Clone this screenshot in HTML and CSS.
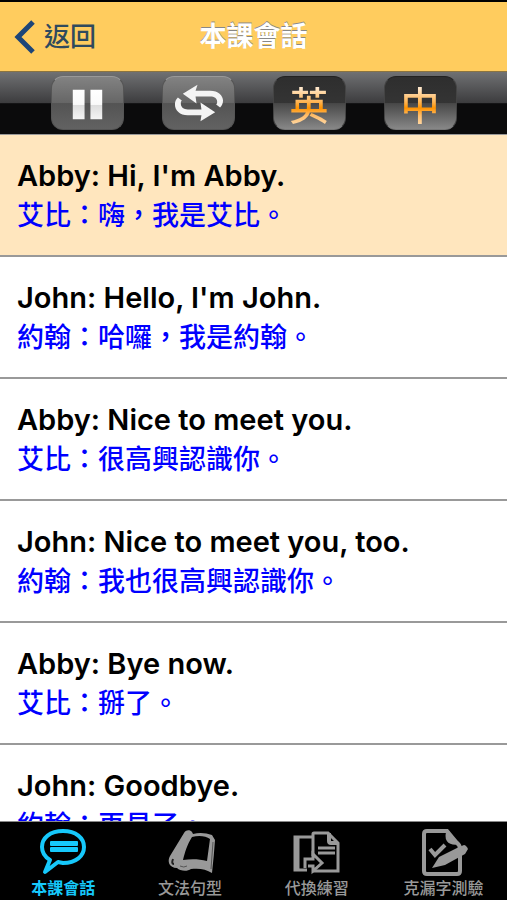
FILE: index.html
```html
<!DOCTYPE html>
<html lang="zh-Hant">
<head>
<meta charset="utf-8">
<meta name="viewport" content="width=device-width, initial-scale=1">
<title>本課會話</title>
<link rel="stylesheet" href="styles.css">
</head>
<body>
<header class="navbar">
  <a class="back" href="#"><svg class="back-icon" viewBox="0 0 22 36" aria-hidden="true"><path d="M19 3 4 18l15 15" fill="none" stroke="#1d4578" stroke-width="5"/></svg>返回</a>
  <h1 class="title">本課會話</h1>
</header>
<div class="toolbar">
  <button class="tool" type="button" aria-label="暫停">
    <svg class="tool-icon" viewBox="0 0 72 53" aria-hidden="true">
      <defs><linearGradient id="silver" x1="0" y1="0" x2="0" y2="1"><stop offset="0" stop-color="#fff"/><stop offset=".5" stop-color="#fafafa"/><stop offset=".52" stop-color="#ddd"/><stop offset="1" stop-color="#f4f4f4"/></linearGradient></defs>
      <path d="M21 13h12v30H21zM39 13h12v30H39z" fill="url(#silver)"/>
    </svg>
  </button>
  <button class="tool" type="button" aria-label="重複">
    <svg class="tool-icon" viewBox="0 0 72 53" aria-hidden="true">
      <path d="M20 17 35 8l-2 6h15c8 0 13 5 13 10 0 3-1 5-3 7l-4-3c1-1 1-2 1-3 0-3-3-5-7-5H33l1 7zM53 36 38 45l1-6H25c-8 0-13-5-13-11 0-3 1-5 3-7l4 3c-1 1-1 2-1 3 0 4 3 6 7 6h14l-1-7z" fill="#f4f4f4"/>
    </svg>
  </button>
  <button class="tool tool-on" type="button" aria-pressed="true"><span class="tool-text">英</span></button>
  <button class="tool tool-on" type="button" aria-pressed="true"><span class="tool-text">中</span></button>
</div>
<main class="lines">
  <article class="line line-active"><p class="en">Abby: Hi, I'm Abby.</p><p class="zh">艾比：嗨，我是艾比。</p></article>
  <article class="line"><p class="en">John: Hello, I'm John.</p><p class="zh">約翰：哈囉，我是約翰。</p></article>
  <article class="line"><p class="en">Abby: Nice to meet you.</p><p class="zh">艾比：很高興認識你。</p></article>
  <article class="line"><p class="en">John: Nice to meet you, too.</p><p class="zh">約翰：我也很高興認識你。</p></article>
  <article class="line"><p class="en">Abby: Bye now.</p><p class="zh">艾比：掰了。</p></article>
  <article class="line"><p class="en">John: Goodbye.</p><p class="zh">約翰：再見了。</p></article>
</main>
<nav class="tabs">
  <a class="tab tab-current" href="#">
    <svg class="tab-icon" viewBox="0 0 50 50" aria-hidden="true"><path d="M25 5C12 5 4 12 4 21c0 6 3 10 8 13L7 46l13-10 5 1c13 0 21-7 21-16S38 5 25 5z" fill="none" stroke="currentColor" stroke-width="4" stroke-linejoin="round"/><rect x="12" y="15" width="28" height="5" rx="1" fill="currentColor"/><rect x="12" y="21" width="28" height="5" rx="1" fill="currentColor"/></svg>
    本課會話
  </a>
  <a class="tab" href="#">
    <svg class="tab-icon" viewBox="0 0 50 50" aria-hidden="true"><path fill-rule="evenodd" d="M19 7c1-3 6-4 8-1l1 2c7-2 13-1 19 1l3 5q-1 15-3 33c-6-4-13-5-21-4-4 3-11 2-14-1-8 0-10-7-7-12zM27 11c-5 8-7 15-9 23 8-1 16-1 24 1l3-22c-4-3-11-4-18-2z" fill="currentColor"/><path d="M8 33q-2 5 1 5" fill="none" stroke="#222" stroke-width="2"/><path d="M15 40q4 2 7 0M46 43l2-27" fill="none" stroke="#555" stroke-width="1"/></svg>
    文法句型
  </a>
  <a class="tab" href="#">
    <svg class="tab-icon" viewBox="0 0 50 50" aria-hidden="true"><g fill="none" stroke="currentColor" stroke-width="3"><path d="M20 11H3v33h12M6 11v32" /><path d="M21 30V8q0-1 1-1h14l10 10v28H20"/><path d="M37 7v8q0 2 2 2h7" stroke-width="4"/><path d="M26 22h17M26 27h17"/><path d="M13 42V33h8v-5l9 9-9 8v-5h-5"/></g></svg>
    代換練習
  </a>
  <a class="tab" href="#">
    <svg class="tab-icon" viewBox="0 0 50 50" aria-hidden="true"><path d="M38 17 28 5H8Q5 5 5 8v37q0 3 3 3h30q3 0 3-3V29M38 17q3 2 3 6" fill="none" stroke="currentColor" stroke-width="4"/><path d="M29 5q0 3 1 6 2 4 9 6-7 1-10-3-2-3 0-9z" fill="none" stroke="currentColor" stroke-width="3"/><path d="m11 23 5 6 10-10" fill="none" stroke="currentColor" stroke-width="4"/><path d="m13 42 7-11 20-10 5-2q2 0 4 4l-3 5-20 11z" fill="currentColor"/></svg>
    克漏字測驗
  </a>
</nav>
</body>
</html>
```
FILE: styles.css
```css
* { box-sizing: border-box; }

body {
  display: flex;
  flex-direction: column;
  height: 100vh;
  margin: 0;
  overflow: hidden;
  background: #fff;
  font-family: Inter, "Noto Sans CJK TC", sans-serif;
}

a { text-decoration: none; }
h1, p { margin: 0; }

.navbar {
  display: grid;
  grid-template-columns: 1fr auto 1fr;
  align-items: center;
  flex: none;
  height: 71px;
  padding: 0 14px;
  border-top: 2px solid #000;
  background: #ffcc5e;
}

.back {
  display: flex;
  align-items: center;
  gap: 8px;
  color: #2f4a5e;
  font-size: 26px;
  font-weight: 500;
  line-height: 36px;
}

.back-icon { width: 22px; height: 36px; }

.title {
  color: #fff;
  font-size: 27px;
  font-weight: 700;
  line-height: 36px;
  text-shadow: 0 -1px 0 #888;
}

.toolbar {
  display: flex;
  justify-content: center;
  align-items: center;
  gap: 38px;
  flex: none;
  height: 64px;
  border-top: 1px solid #8b7440;
  border-bottom: 1px solid #999;
  background: linear-gradient(#707173, #3c3c3e 50%, #0b0b0c 51%, #0b0b0c);
}

.tool {
  width: 73px;
  height: 54px;
  padding: 0;
  border: 1px solid #555;
  border-top-color: #999;
  border-radius: 12px;
  background: linear-gradient(#828282, #666 50%, #545454 51%, #626262);
}

.tool-on {
  border-color: #222 #444 #777;
  background: linear-gradient(#2e2e2e, #343434 50%, #484848 51%, #888);
}

.tool-icon { display: block; width: 100%; height: 100%; }

.tool-text {
  display: block;
  background: linear-gradient(#ffe8cc 20%, #ffb452 48%, #ff9300 60%, #ffbd6b 75%, #ffe0b5);
  background-clip: text;
  color: transparent;
  font-family: "Noto Sans CJK TC", sans-serif;
  font-size: 39px;
  font-weight: 500;
  line-height: 50px;
}

.lines {
  flex: 1;
  min-height: 0;
  overflow: hidden;
}

.line {
  padding: 22px 17px 21px;
  border-bottom: 2px solid #999;
}

.line-active { background: #ffe6be; }

.en {
  color: #000;
  font-size: 29px;
  font-weight: 600;
  line-height: 37px;
}

.zh {
  color: #00f;
  font-family: "Noto Sans CJK TC", sans-serif;
  font-size: 27px;
  font-weight: 500;
  line-height: 40px;
}

.tabs {
  display: grid;
  grid-template-columns: repeat(4, 1fr);
  flex: none;
  height: 79px;
  border-top: 1px solid #888;
  background: #000;
}

.tab {
  display: flex;
  flex-direction: column;
  align-items: center;
  padding-top: 4px;
  color: #999;
  font-size: 16px;
  font-weight: 500;
  line-height: 24px;
}

.tab-current { color: #16c8fb; font-weight: 700; }
.tab-icon { width: 50px; height: 50px; }
```
